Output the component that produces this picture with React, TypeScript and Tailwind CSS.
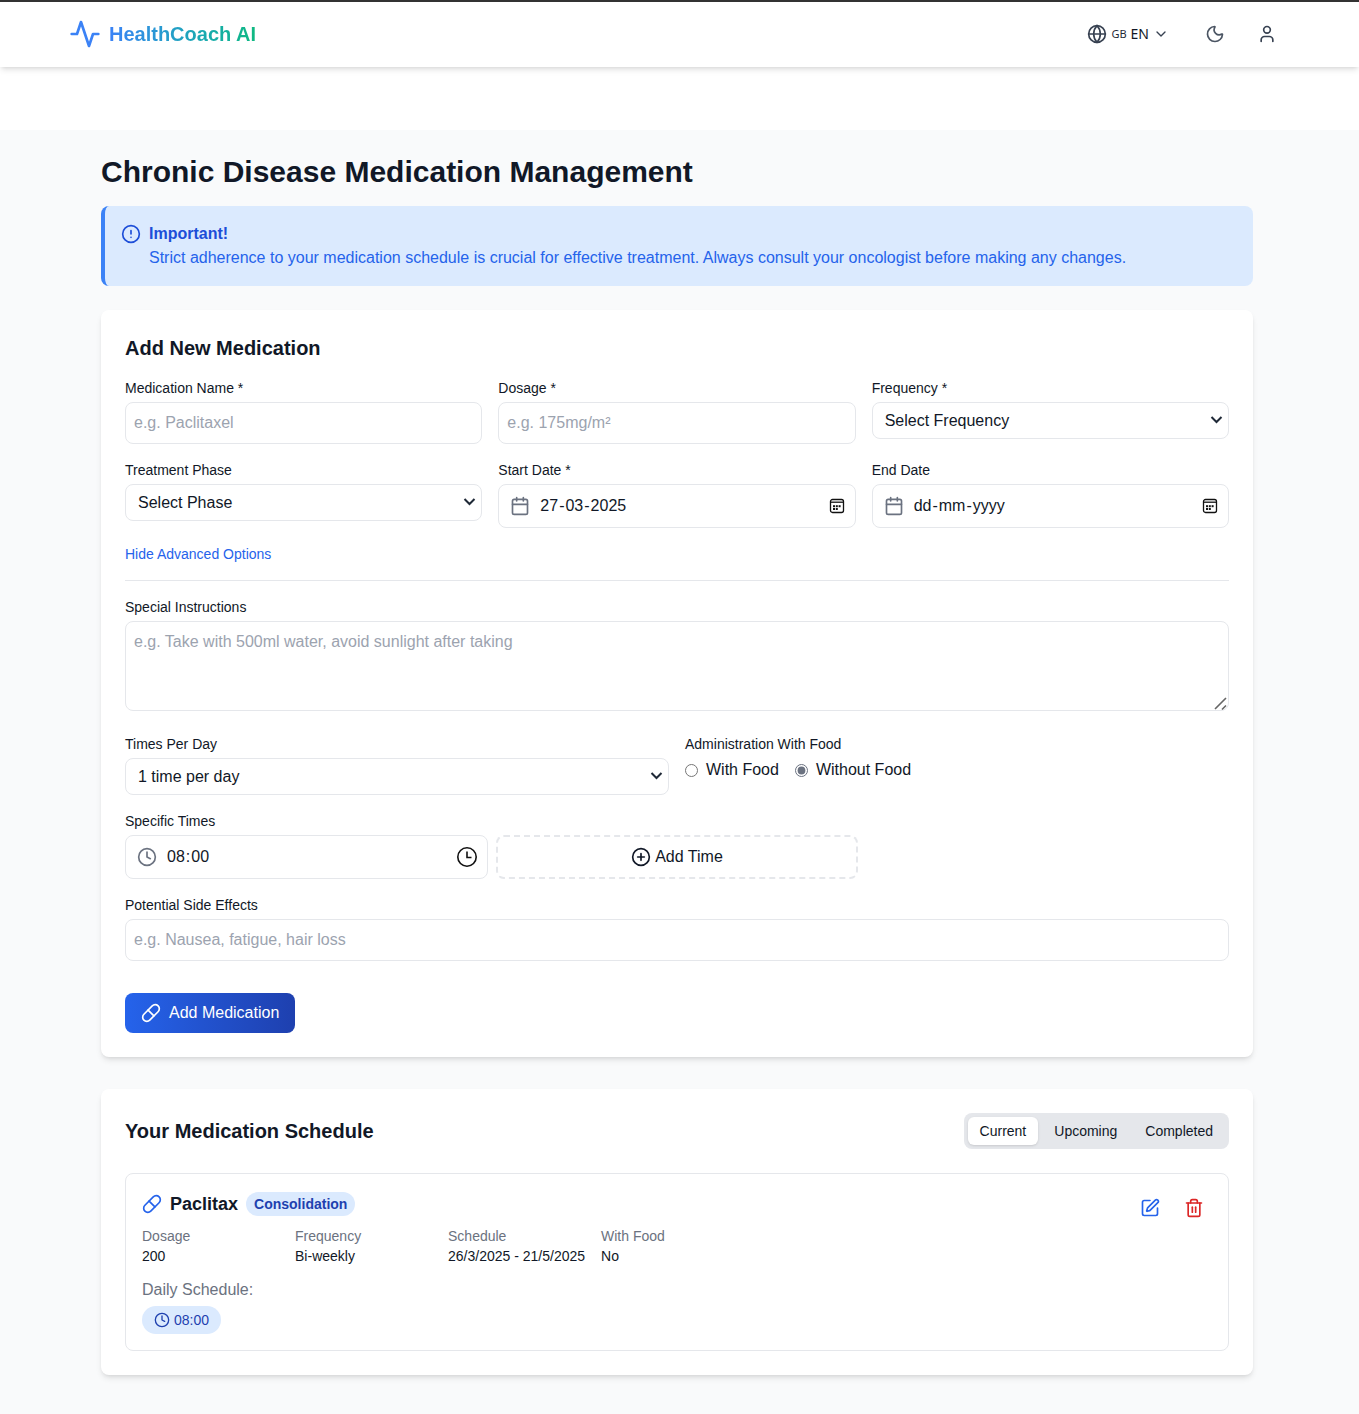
import { Calendar, ChevronDown, CircleAlert, CirclePlus, Clock, Globe, Moon, Pill, SquarePen, Trash2, User } from "lucide-react";
import type { ReactNode } from "react";

const fieldClass =
  "w-full rounded-lg border border-[#e5e7eb] bg-white px-2 py-2 text-base leading-6 text-[#111827] placeholder:text-[#9ca3af] outline-none";

function Field({ label, children }: { label: string; children: ReactNode }) {
  return (
    <div>
      <label className="mb-1 block text-sm text-[#111827]">{label}</label>
      {children}
    </div>
  );
}

function SelectField({ value }: { value: string }) {
  return (
    <div className="relative">
      <select className="h-[37px] w-full appearance-none rounded-lg border border-[#e5e7eb] bg-white pl-3 pr-8 text-base text-[#111827] outline-none">
        <option>{value}</option>
      </select>
      <svg className="pointer-events-none absolute right-[6px] top-[13px]" width="13" height="10" viewBox="0 0 13 10" fill="none" stroke="#1f2937" strokeWidth="2">
        <path d="M1.5 2l5 5 5-5" />
      </svg>
    </div>
  );
}

function PickerCalendar() {
  return (
    <svg width="16" height="16" viewBox="0 0 16 16" fill="none" stroke="#111" strokeWidth="1.3">
      <rect x="1.5" y="1.5" width="13" height="13" rx="2" />
      <path d="M1.5 4.2h13" />
      <g fill="#111" stroke="none">
        <rect x="4" y="7.2" width="2" height="2" />
        <rect x="6.8" y="7.2" width="2" height="2" />
        <rect x="9.6" y="7.2" width="2" height="2" />
        <rect x="4" y="10" width="2" height="2" />
        <rect x="6.8" y="10" width="2" height="2" />
      </g>
    </svg>
  );
}

function PickerClock() {
  return (
    <svg width="22" height="22" viewBox="0 0 22 22" fill="none" stroke="#111" strokeWidth="1.6">
      <circle cx="11" cy="11" r="9.2" />
      <path d="M11 5.5v6h4.5" />
    </svg>
  );
}

function DateField({ parts }: { parts: string[] }) {
  return (
    <div className="flex h-11 items-center rounded-lg border border-[#e5e7eb] bg-white pl-[11px] pr-[10px]">
      <Calendar className="h-5 w-5 text-[#6b7280]" />
      <span className="ml-[9px] flex-1 text-base text-[#111827]">
        <span className="px-px">{parts[0]}</span>-<span className="px-px">{parts[1]}</span>-<span className="px-px">{parts[2]}</span>
      </span>
      <PickerCalendar />
    </div>
  );
}

function Tab({ label, active }: { label: string; active?: boolean }) {
  return (
    <button className={active ? "rounded-md bg-white px-3 py-1 text-sm text-[#111827] shadow-sm" : "rounded-md px-3 py-1 text-sm text-[#111827]"}>
      {label}
    </button>
  );
}

function Detail({ label, value }: { label: string; value: string }) {
  return (
    <div className="text-sm">
      <p className="text-[#6b7280]">{label}</p>
      <p className="text-[#111827]">{value}</p>
    </div>
  );
}

export default function App() {
  return (
    <div className="min-h-[1414px] bg-[#f9fafb] font-['Liberation_Sans',Arial,sans-serif] text-[#111827]">
      <header className="relative z-10 flex h-[67px] items-center justify-between border-t-2 border-[#333] bg-white pb-px pl-[69px] pr-[74px] shadow-md">
        <div className="flex items-center gap-2">
          <svg width="32" height="32" viewBox="0 0 24 24" fill="none" stroke="#3b82f6" strokeWidth="2" strokeLinecap="round" strokeLinejoin="round">
            <polyline points="22 12 18 12 15 21 9 3 6 12 2 12" />
          </svg>
          <span className="bg-gradient-to-r from-[#3b82f6] to-[#10b981] bg-clip-text text-xl font-bold text-transparent">HealthCoach AI</span>
        </div>
        <div className="flex items-center gap-4">
          <button className="mr-1 flex items-center p-2 text-[#374151]">
            <Globe className="h-5 w-5" />
            <span className="ml-1 mt-px font-['Noto_Sans',sans-serif] text-[11px] text-[#1f2937]">GB</span>
            <span className="ml-1 font-['Noto_Sans',sans-serif] text-sm text-[#111827]">EN</span>
            <ChevronDown className="ml-1 h-4 w-4" />
          </button>
          <button className="p-2 text-[#4b5563]">
            <Moon className="h-5 w-5" />
          </button>
          <button className="p-2 text-[#374151]">
            <User className="h-5 w-5" />
          </button>
        </div>
      </header>
      <div className="h-[63px] bg-white" />

      <main className="ml-[101px] w-[1152px] pt-6">
        <h1 className="mb-4 text-3xl font-bold text-[#111827]">Chronic Disease Medication Management</h1>

        <div className="mb-6 flex gap-2 rounded-lg border-l-4 border-[#3b82f6] bg-[#dbeafe] p-4">
          <CircleAlert className="mt-[2px] h-5 w-5 text-[#1d4ed8]" />
          <div>
            <p className="font-bold text-[#1d4ed8]">Important!</p>
            <p className="text-[#2563eb]">
              Strict adherence to your medication schedule is crucial for effective treatment. Always consult your oncologist before making any changes.
            </p>
          </div>
        </div>

        <section className="mb-8 rounded-lg bg-white p-6 shadow-md">
          <h2 className="mb-4 text-xl font-bold">Add New Medication</h2>
          <div className="grid grid-cols-3 items-start gap-4">
            <Field label="Medication Name *">
              <input className={fieldClass} placeholder="e.g. Paclitaxel" />
            </Field>
            <Field label="Dosage *">
              <input className={fieldClass} placeholder="e.g. 175mg/m²" />
            </Field>
            <Field label="Frequency *">
              <SelectField value="Select Frequency" />
            </Field>
            <Field label="Treatment Phase">
              <SelectField value="Select Phase" />
            </Field>
            <Field label="Start Date *">
              <DateField parts={["27", "03", "2025"]} />
            </Field>
            <Field label="End Date">
              <DateField parts={["dd", "mm", "yyyy"]} />
            </Field>
          </div>

          <p className="mt-4 text-sm text-[#2563eb]">Hide Advanced Options</p>

          <div className="mt-4 border-t border-[#e5e7eb] pt-4">
            <div className="mb-4">
              <label className="mb-1 block text-sm">Special Instructions</label>
              <div className="relative">
                <textarea className={fieldClass + " h-[90px] resize-none"} placeholder="e.g. Take with 500ml water, avoid sunlight after taking" />
                <svg className="pointer-events-none absolute right-[2px] top-[76px]" width="14" height="14" viewBox="0 0 14 14" fill="none" stroke="#666" strokeWidth="1.6">
                  <path d="M2 12L13 1M9 12.5L13 8.5" />
                </svg>
              </div>
            </div>

            <div className="mb-4 grid grid-cols-2 gap-4">
              <Field label="Times Per Day">
                <SelectField value="1 time per day" />
              </Field>
              <div>
                <label className="mb-1 block text-sm">Administration With Food</label>
                <div className="flex items-center gap-4">
                  <label className="flex items-center gap-2">
                    <input type="radio" name="food" className="accent-[#6b7280]" />
                    With Food
                  </label>
                  <label className="flex items-center gap-2">
                    <input type="radio" name="food" defaultChecked className="accent-[#6b7280]" />
                    Without Food
                  </label>
                </div>
              </div>
            </div>

            <div className="mb-4">
              <label className="mb-1 block text-sm">Specific Times</label>
              <div className="grid grid-cols-3 gap-2">
                <div className="flex h-11 items-center rounded-lg border border-[#e5e7eb] bg-white pl-[11px] pr-[9px]">
                  <Clock className="h-5 w-5 text-[#6b7280]" />
                  <span className="ml-[9px] flex-1">
                    <span className="px-px">08</span>:<span className="px-px">00</span>
                  </span>
                  <PickerClock />
                </div>
                <button className="flex h-11 items-center justify-center gap-1 rounded-lg border-2 border-dashed border-[#e5e7eb]">
                  <CirclePlus className="h-5 w-5" />
                  Add Time
                </button>
              </div>
            </div>

            <Field label="Potential Side Effects">
              <input className={fieldClass} placeholder="e.g. Nausea, fatigue, hair loss" />
            </Field>
          </div>

          <button className="mt-8 flex items-center gap-2 rounded-lg bg-gradient-to-r from-[#2563eb] to-[#1e40af] px-4 py-2 text-white">
            <Pill className="h-5 w-5" />
            Add Medication
          </button>
        </section>

        <section className="rounded-lg bg-white p-6 shadow-md">
          <div className="mb-6 flex items-center justify-between">
            <h2 className="text-xl font-bold">Your Medication Schedule</h2>
            <div className="flex gap-1 rounded-lg bg-[#e5e7eb] p-1">
              <Tab label="Current" active />
              <Tab label="Upcoming" />
              <Tab label="Completed" />
            </div>
          </div>

          <div className="flex items-start justify-between rounded-lg border border-[#e5e7eb] p-4">
            <div>
              <div className="flex h-7 items-center">
                <Pill className="h-5 w-5 text-[#2563eb]" />
                <span className="ml-2 text-lg font-bold">Paclitax</span>
                <span className="ml-2 rounded-full bg-[#dbeafe] px-2 py-0.5 text-sm font-bold text-[#1e40af]">Consolidation</span>
              </div>
              <div className="mt-2 grid w-fit grid-cols-4 gap-x-4">
                <Detail label="Dosage" value="200" />
                <Detail label="Frequency" value="Bi-weekly" />
                <Detail label="Schedule" value="26/3/2025 - 21/5/2025" />
                <Detail label="With Food" value="No" />
              </div>
              <p className="mt-3 mb-1 text-[#6b7280]">Daily Schedule:</p>
              <div className="flex w-fit items-center gap-1 rounded-full bg-[#dbeafe] px-3 py-1 text-sm text-[#1e40af]">
                <Clock className="h-4 w-4" />
                08:00
              </div>
            </div>
            <div className="flex gap-2">
              <button className="p-2 text-[#2563eb]">
                <SquarePen className="h-5 w-5" />
              </button>
              <button className="p-2 text-[#dc2626]">
                <Trash2 className="h-5 w-5" />
              </button>
            </div>
          </div>
        </section>
      </main>
    </div>
  );
}
